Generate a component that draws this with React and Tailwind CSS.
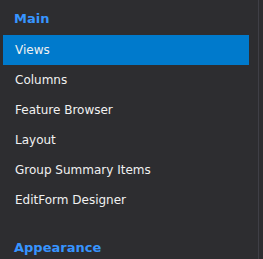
export default function App() {
  const items = ["Views", "Columns", "Feature Browser", "Layout", "Group Summary Items", "EditForm Designer"];
  return (
    <div className="w-[263px] h-[259px] bg-[#2d2d30] flex overflow-hidden" style={{ fontFamily: "'DejaVu Sans', sans-serif" }}>
      <div className="w-[258px] flex flex-col pl-[3px] pr-[9px]">
        <div className="h-[35px] shrink-0 flex items-center pt-[3px] pl-[11px] text-[13px] font-bold text-[#3794ff]">Main</div>
        {items.map((t, i) => (
          <div
            key={t}
            className={`h-[30px] shrink-0 flex items-center pl-[12px] text-[12px] text-[#f1f1f1] ${i === 0 ? "bg-[#007acc]" : ""}`}
          >
            {t}
          </div>
        ))}
        <div className="h-[14px] shrink-0" />
        <div className="h-[35px] shrink-0 flex items-center pt-[3px] pl-[11px] text-[13px] font-bold text-[#3794ff]">Appearance</div>
      </div>
      <div className="w-px bg-[#3f3f46]" />
    </div>
  );
}
